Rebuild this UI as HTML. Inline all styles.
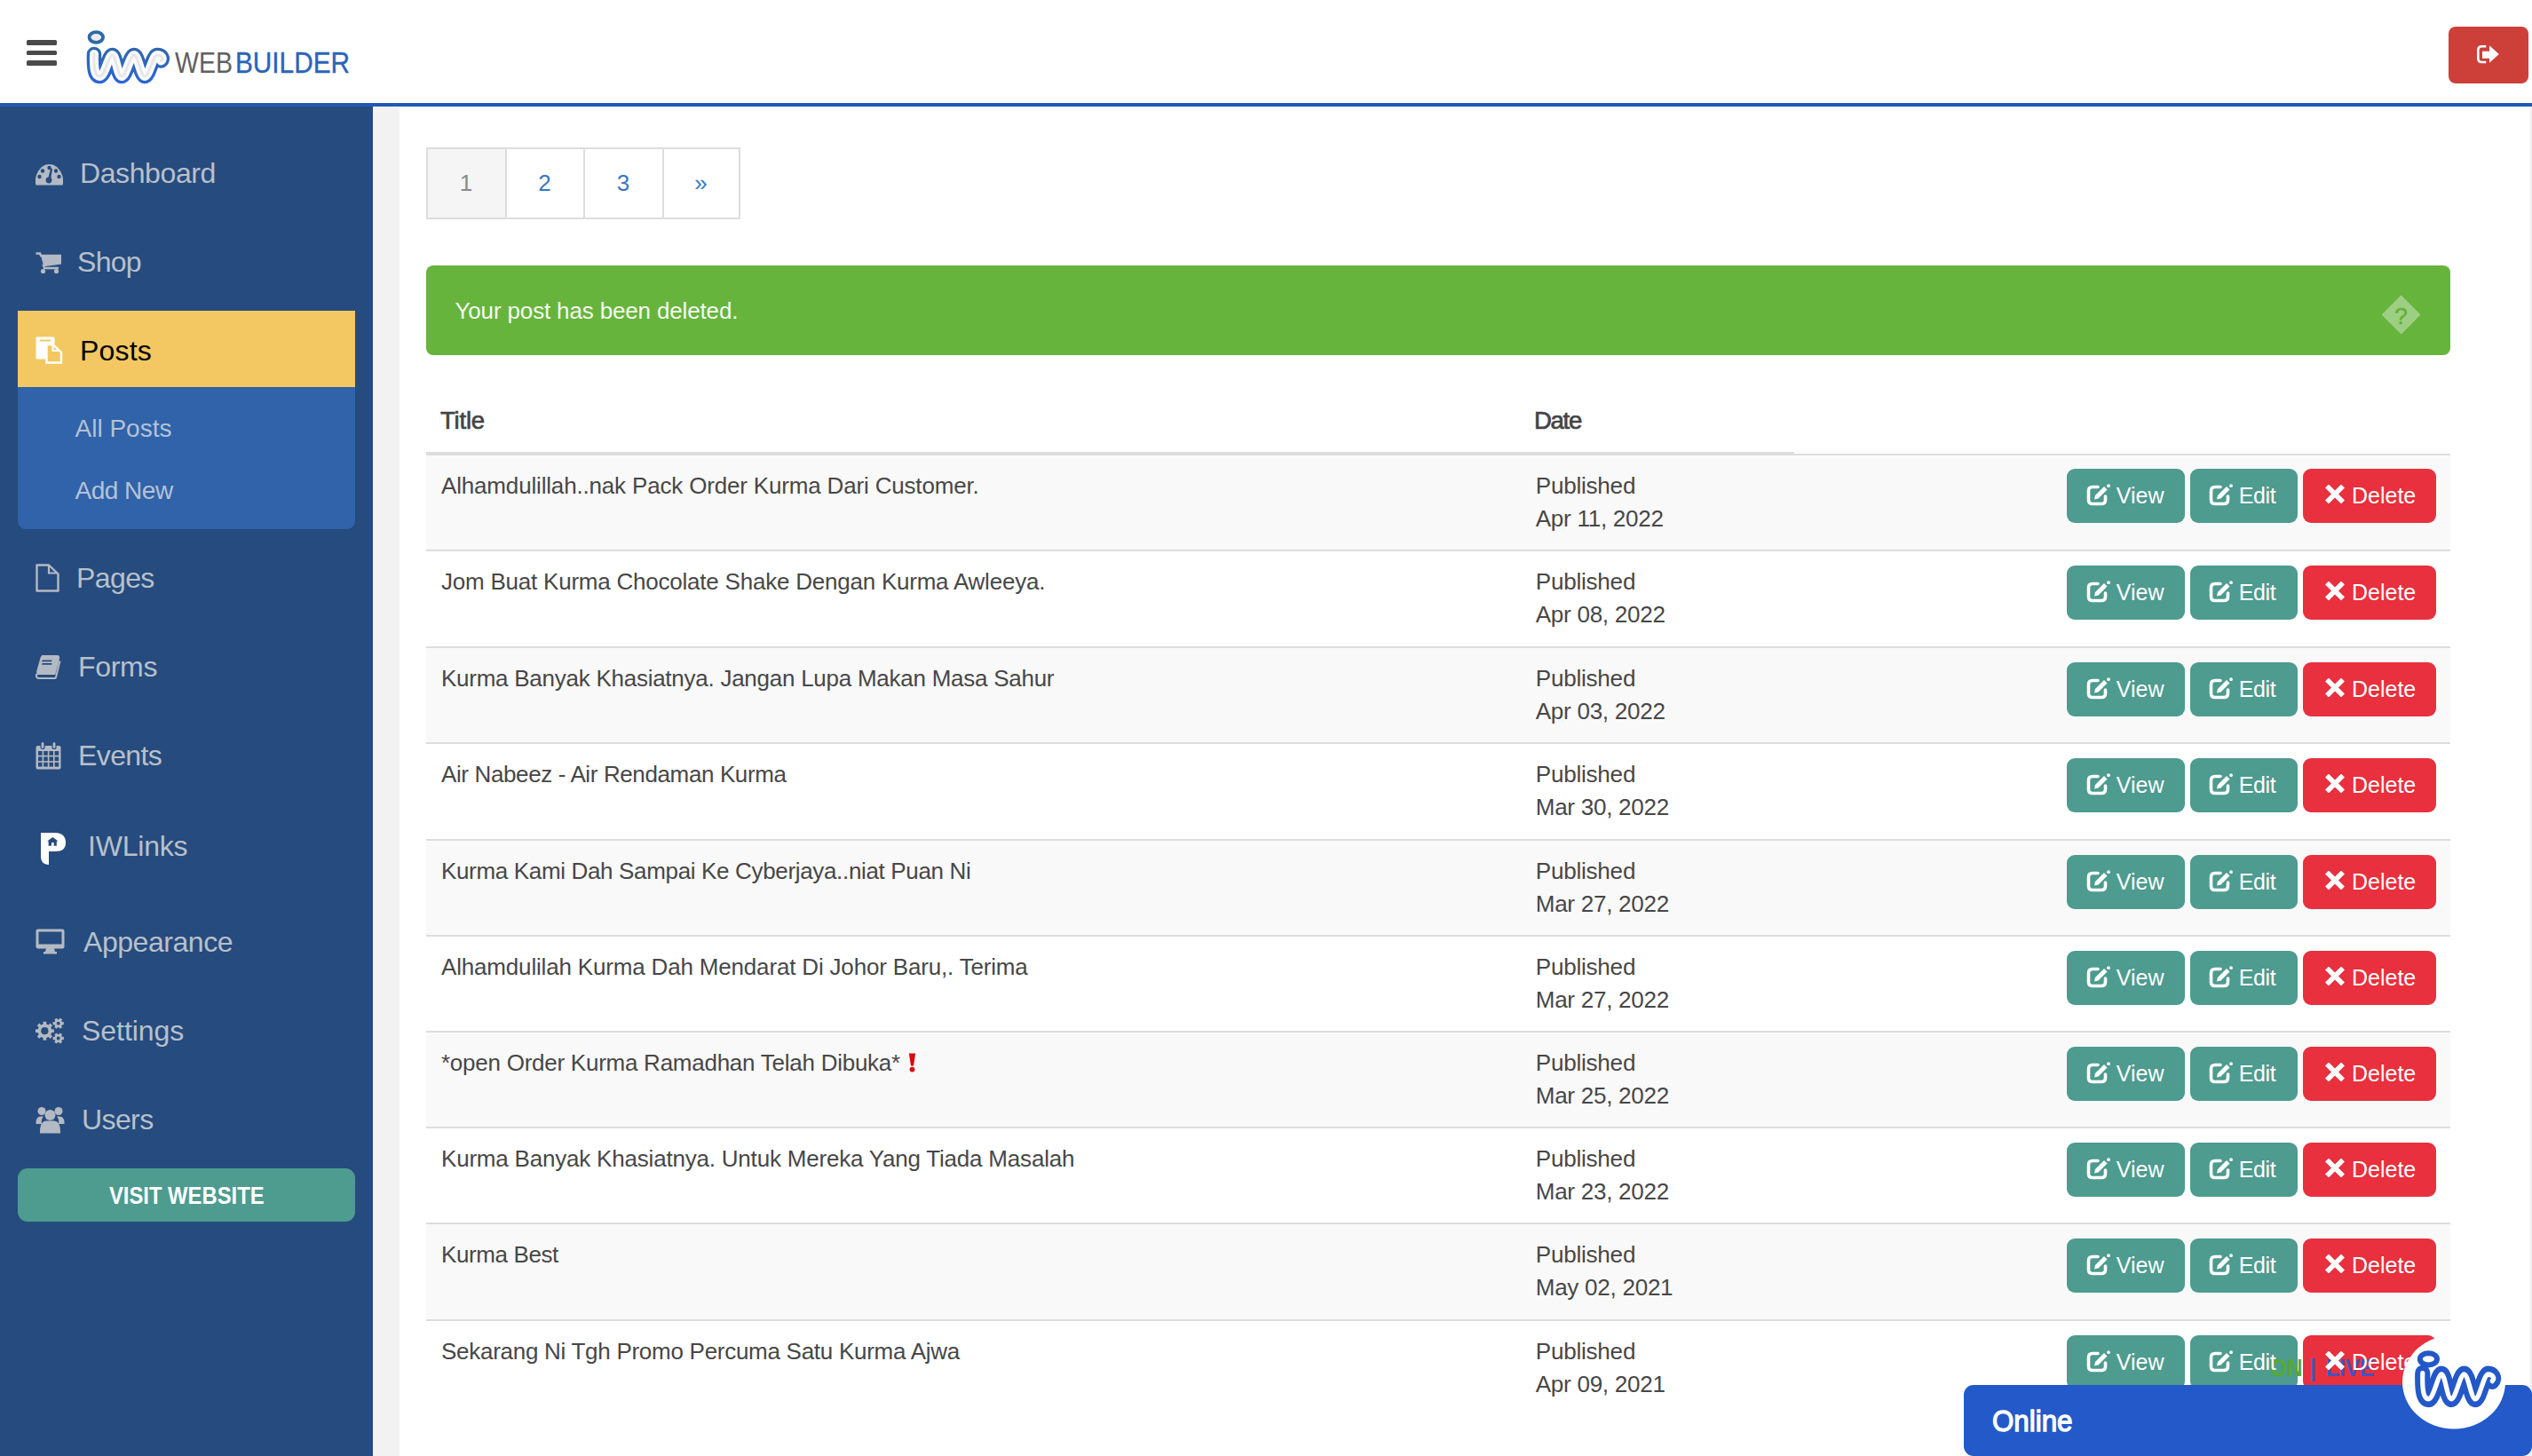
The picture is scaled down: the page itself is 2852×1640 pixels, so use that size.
<!DOCTYPE html>
<html><head><meta charset="utf-8"><title>Posts</title>
<style>
html,body{margin:0;padding:0;width:2852px;height:1640px;overflow:hidden;background:#fff;}
body{position:relative;font-family:"Liberation Sans",sans-serif;}
.t{position:absolute;white-space:nowrap;}
.r{position:absolute;}
@media (max-width:1500px){html{zoom:0.5;}}
</style></head><body>
<div class="r" style="left:0px;top:0px;width:2852px;height:116px;background:#fff;"></div>
<div class="r" style="left:0px;top:116px;width:2852px;height:4px;background:#2257b3;"></div>
<div class="r" style="left:30px;top:45.3px;width:34px;height:5.5px;background:#4a4a4a;border-radius:1.5px;"></div>
<div class="r" style="left:30px;top:56.9px;width:34px;height:5.5px;background:#4a4a4a;border-radius:1.5px;"></div>
<div class="r" style="left:30px;top:68.3px;width:34px;height:5.5px;background:#4a4a4a;border-radius:1.5px;"></div>
<svg class="r" style="left:0px;top:0px" width="200" height="110" viewBox="0 0 200 110">
<defs><linearGradient id="lg1" x1="0" y1="50" x2="0" y2="95" gradientUnits="userSpaceOnUse">
<stop offset="0" stop-color="#2f67a8"/><stop offset="1" stop-color="#2a66d6"/></linearGradient></defs>
<g fill="none" stroke-linecap="round" stroke-linejoin="round">
<ellipse cx="108.3" cy="42" rx="7.8" ry="5.8" stroke="#2d6aa6" stroke-width="3.8" fill="#ececec"/>
<path d="M106 61 C105.5 78 107 86 112.5 86 C118 86 122.5 62 126.5 62 C130.5 62 132.5 86 137 86 C142 86 146.5 62 151 62 C155.5 62 158.5 86 163 86 C168 86 172 62 177 62 C182 62 184.5 66 181.5 68.5" stroke="url(#lg1)" stroke-width="16.5"/>
<path d="M106 61 C105.5 78 107 86 112.5 86 C118 86 122.5 62 126.5 62 C130.5 62 132.5 86 137 86 C142 86 146.5 62 151 62 C155.5 62 158.5 86 163 86 C168 86 172 62 177 62 C182 62 184.5 66 181.5 68.5" stroke="#fbfbfb" stroke-width="10"/>
<path d="M106 61 C105.5 78 107 86 112.5 86 C118 86 122.5 62 126.5 62 C130.5 62 132.5 86 137 86 C142 86 146.5 62 151 62 C155.5 62 158.5 86 163 86 C168 86 172 62 177 62 C182 62 184.5 66 181.5 68.5" stroke="#e2e2e2" stroke-width="3" opacity="0.8"/>
</g></svg>
<div class="t" style="left:196.7px;top:49.66px;font-size:33px;line-height:41px;color:#606060;font-weight:400;letter-spacing:0px;transform:scaleX(0.864);transform-origin:0 0;">WEB</div>
<div class="t" style="left:264.9px;top:49.66px;font-size:33px;line-height:41px;color:#2a64b9;font-weight:400;letter-spacing:0px;transform:scaleX(0.902);transform-origin:0 0;-webkit-text-stroke:0.35px #2a64b9;">BUILDER</div>
<div class="r" style="left:2758px;top:30px;width:90px;height:64px;background:#cc4039;border-radius:8px;"></div>
<svg class="r" style="left:2789px;top:50px" width="28" height="23" viewBox="0 0 28 23">
<path d="M11.3 2.2 H6.5 Q2.3 2.2 2.3 6.4 V15.8 Q2.3 20 6.5 20 H11.3" fill="none" stroke="#fff" stroke-width="2.6"/>
<path d="M7 7.7 H15 V1.2 L25.8 11 L15 20.7 V15.7 H7 Z" fill="#fff"/>
</svg>
<div class="r" style="left:0px;top:120px;width:420px;height:1520px;background:#264b7e;"></div>
<div class="r" style="left:420px;top:120px;width:30px;height:1520px;background:#f2f2f2;"></div>
<div class="r" style="left:20px;top:350px;width:380px;height:86px;background:#f3c862;"></div>
<div class="r" style="left:20px;top:436px;width:380px;height:160px;background:#3063a9;border-radius:0 0 9px 9px;"></div>
<div class="t" style="left:90px;top:174.91px;font-size:32px;line-height:40px;color:#b8c0cb;font-weight:400;letter-spacing:-0.4px;">Dashboard</div>
<div class="t" style="left:87px;top:274.91px;font-size:32px;line-height:40px;color:#b8c0cb;font-weight:400;letter-spacing:-0.7px;">Shop</div>
<div class="t" style="left:90px;top:375.16px;font-size:32px;line-height:40px;color:#000;font-weight:400;letter-spacing:0.2px;">Posts</div>
<div class="t" style="left:86px;top:630.91px;font-size:32px;line-height:40px;color:#b8c0cb;font-weight:400;letter-spacing:-0.6px;">Pages</div>
<div class="t" style="left:88px;top:730.91px;font-size:32px;line-height:40px;color:#b8c0cb;font-weight:400;letter-spacing:-0.3px;">Forms</div>
<div class="t" style="left:88px;top:830.91px;font-size:32px;line-height:40px;color:#b8c0cb;font-weight:400;letter-spacing:-0.6px;">Events</div>
<div class="t" style="left:99px;top:933.41px;font-size:32px;line-height:40px;color:#b8c0cb;font-weight:400;letter-spacing:-0.2px;">IWLinks</div>
<div class="t" style="left:94px;top:1040.91px;font-size:32px;line-height:40px;color:#b8c0cb;font-weight:400;letter-spacing:-0.45px;">Appearance</div>
<div class="t" style="left:92px;top:1140.91px;font-size:32px;line-height:40px;color:#b8c0cb;font-weight:400;letter-spacing:-0.05px;">Settings</div>
<div class="t" style="left:92px;top:1240.91px;font-size:32px;line-height:40px;color:#b8c0cb;font-weight:400;letter-spacing:-0.6px;">Users</div>
<div class="t" style="left:84.5px;top:464.79px;font-size:28px;line-height:35px;color:#b5c2d6;font-weight:400;letter-spacing:0px;">All Posts</div>
<div class="t" style="left:84.5px;top:534.79px;font-size:28px;line-height:35px;color:#b5c2d6;font-weight:400;letter-spacing:-0.5px;">Add New</div>
<div class="r" style="left:20px;top:1316px;width:380px;height:60px;background:#4e9b8f;border-radius:11px;"></div>
<div class="t" style="left:123px;top:1328.79px;font-size:28px;line-height:35px;color:#fff;font-weight:700;letter-spacing:0px;transform:scaleX(0.85);transform-origin:0 0;">VISIT WEBSITE</div>
<svg class="r" style="left:40px;top:184px" width="31" height="25" viewBox="0 0 31 25">
<path d="M0.5 24.5 C-1 20 0 14 3 9 C6 4 10 1 15.5 1 C21 1 25 4 28 9 C31 14 32 20 30.5 24.5 Z" fill="#b4bac3"/>
<g fill="#264b7e"><circle cx="15.5" cy="5" r="2.2"/><circle cx="8" cy="8.5" r="2.2"/><circle cx="23" cy="8.5" r="2.2"/>
<circle cx="4.5" cy="15" r="2.2"/><circle cx="26.5" cy="15" r="2.2"/><circle cx="15" cy="19" r="3.4"/>
<path d="M14 18 L17 5.5 L19 6 L17 19 Z"/></g></svg>
<svg class="r" style="left:40px;top:284px" width="29" height="25" viewBox="0 0 29 25">
<path d="M0.5 1.5 H5 L6 4 H28 V12.5 L9 15 L10 18 H26" fill="none" stroke="#b4bac3" stroke-width="2.4"/>
<path d="M6 4 H28 V12.5 L9 15 Z" fill="#b4bac3"/>
<circle cx="8.5" cy="21.5" r="2.6" fill="#b4bac3"/><circle cx="23.5" cy="21.5" r="2.6" fill="#b4bac3"/></svg>
<svg class="r" style="left:40px;top:379px" width="31" height="32" viewBox="0 0 31 32">
<path d="M2 0.5 H20 Q21.5 0.5 21.5 2 V9 H12 V25.5 H2 Q0.5 25.5 0.5 24 V2 Q0.5 0.5 2 0.5 Z" fill="#fff"/>
<rect x="4.5" y="3.5" width="12.5" height="2" fill="#f3c862"/>
<path d="M12.5 9 H19.5 L29 18 V29.5 H12.5 Z" fill="none" stroke="#fff" stroke-width="2.4"/>
<path d="M19.5 9 V16 H28" fill="none" stroke="#fff" stroke-width="2.2"/></svg>
<svg class="r" style="left:40px;top:635px" width="27" height="32" viewBox="0 0 27 32">
<path d="M1.5 1.5 H15 L25.5 11.5 V30.5 H1.5 Z" fill="none" stroke="#b4bac3" stroke-width="2.4" stroke-linejoin="round"/>
<path d="M15 1.5 V10.5 H25" fill="none" stroke="#b4bac3" stroke-width="2.2"/></svg>
<svg class="r" style="left:40px;top:738px" width="29" height="27" viewBox="0 0 29 27">
<path d="M7 1 H24.5 Q26.5 1 26 3.5 L21.5 21 H3.5 Q0 21 1 24 Q1.5 26 4 26 H21.5 Q22.5 26 23 25 L27.5 6.5" fill="none" stroke="#b4bac3" stroke-width="2"/>
<path d="M7 1 H24.5 Q26.5 1 26 3.5 L21.5 21 H4 Q0.5 21 1.2 18 L5.5 3 Q6 1 7 1 Z" fill="#b4bac3"/>
<rect x="9" y="5.5" width="11" height="1.8" fill="#264b7e" transform="skewX(-15)"/><rect x="10" y="9" width="11" height="1.8" fill="#264b7e" transform="skewX(-15)"/></svg>
<svg class="r" style="left:40px;top:835px" width="29" height="32" viewBox="0 0 29 32">
<rect x="0.5" y="5" width="28" height="26.5" rx="2" fill="#b4bac3"/>
<rect x="6" y="0.5" width="4" height="8" rx="2" fill="#b4bac3" stroke="#264b7e" stroke-width="1.2"/>
<rect x="19" y="0.5" width="4" height="8" rx="2" fill="#b4bac3" stroke="#264b7e" stroke-width="1.2"/>
<g fill="#264b7e"><rect x="3.0" y="11.0" width="4.6" height="4.8"/><rect x="9.2" y="11.0" width="4.6" height="4.8"/><rect x="15.4" y="11.0" width="4.6" height="4.8"/><rect x="21.6" y="11.0" width="4.6" height="4.8"/><rect x="3.0" y="17.4" width="4.6" height="4.8"/><rect x="9.2" y="17.4" width="4.6" height="4.8"/><rect x="15.4" y="17.4" width="4.6" height="4.8"/><rect x="21.6" y="17.4" width="4.6" height="4.8"/><rect x="3.0" y="23.8" width="4.6" height="4.8"/><rect x="9.2" y="23.8" width="4.6" height="4.8"/><rect x="15.4" y="23.8" width="4.6" height="4.8"/><rect x="21.6" y="23.8" width="4.6" height="4.8"/></g></svg>
<svg class="r" style="left:45px;top:937px" width="30" height="38" viewBox="0 0 30 38">
<path d="M1 1 H17 C26 1 29 6 29 12 C29 19 25 22 17 22 H10 V37 C4 37 1 33 1 28 Z" fill="#fff"/>
<path d="M8.2 10.5 L14.35 5.9 L20.5 10.5 H18.8 V15.8 H15.7 V12.1 H13 V15.8 H9.6 V10.5 Z" fill="#264b7e"/></svg>
<svg class="r" style="left:40px;top:1046px" width="33" height="29" viewBox="0 0 33 29">
<rect x="0.5" y="0.5" width="32" height="22" rx="2.5" fill="#b4bac3"/>
<rect x="3.5" y="3.5" width="26" height="14" fill="#264b7e"/>
<path d="M12 22 H21 L22 26 H24 V28.5 H9 V26 H11 Z" fill="#b4bac3"/></svg>
<svg class="r" style="left:40px;top:1147px" width="33" height="30" viewBox="0 0 33 30">
<g fill="#b4bac3"><path d="M18.21 12.45 L20.83 12.34 L20.83 16.06 L18.21 15.95 L17.16 18.48 L19.10 20.26 L16.46 22.90 L14.68 20.96 L12.15 22.01 L12.26 24.63 L8.54 24.63 L8.65 22.01 L6.12 20.96 L4.34 22.90 L1.70 20.26 L3.64 18.48 L2.59 15.95 L-0.03 16.06 L-0.03 12.34 L2.59 12.45 L3.64 9.92 L1.70 8.14 L4.34 5.50 L6.12 7.44 L8.65 6.39 L8.54 3.77 L12.26 3.77 L12.15 6.39 L14.68 7.44 L16.46 5.50 L19.10 8.14 L17.16 9.92 Z"/><path d="M30.06 4.22 L31.79 4.07 L31.79 7.33 L30.06 7.18 L29.16 8.73 L30.15 10.15 L27.33 11.79 L26.60 10.21 L24.80 10.21 L24.07 11.79 L21.25 10.15 L22.24 8.73 L21.34 7.18 L19.61 7.33 L19.61 4.07 L21.34 4.22 L22.24 2.67 L21.25 1.25 L24.07 -0.39 L24.80 1.19 L26.60 1.19 L27.33 -0.39 L30.15 1.25 L29.16 2.67 Z"/><path d="M30.06 21.02 L31.79 20.87 L31.79 24.13 L30.06 23.98 L29.16 25.53 L30.15 26.95 L27.33 28.59 L26.60 27.01 L24.80 27.01 L24.07 28.59 L21.25 26.95 L22.24 25.53 L21.34 23.98 L19.61 24.13 L19.61 20.87 L21.34 21.02 L22.24 19.47 L21.25 18.05 L24.07 16.41 L24.80 17.99 L26.60 17.99 L27.33 16.41 L30.15 18.05 L29.16 19.47 Z"/></g>
<g fill="#264b7e"><circle cx="10.4" cy="14.2" r="4.1"/><circle cx="25.7" cy="5.7" r="1.9"/><circle cx="25.7" cy="22.5" r="1.9"/></g></svg>
<svg class="r" style="left:40px;top:1246px" width="33" height="31" viewBox="0 0 33 31">
<g fill="#b4bac3"><circle cx="7" cy="5.5" r="4.5"/><circle cx="26" cy="5.5" r="4.5"/><circle cx="16.5" cy="10" r="6"/>
<path d="M0.5 19 Q0.5 11.5 6 11.5 H9 Q6 15 7 20 H0.5 Z"/><path d="M32.5 19 Q32.5 11.5 27 11.5 H24 Q27 15 26 20 H32.5 Z"/>
<path d="M5 30.5 Q4.5 17 12 16.5 H21 Q28.5 17 28 30.5 Z"/></g></svg>
<div class="r" style="left:450px;top:120px;width:2400px;height:1520px;background:#fff;"></div>
<div class="r" style="left:2850px;top:120px;width:2px;height:1520px;background:#f0f0f0;"></div>
<div class="r" style="left:480px;top:166px;width:354px;height:81px;border:2px solid #ddd;box-sizing:border-box;"></div>
<div class="r" style="left:482px;top:168px;width:87px;height:77px;background:#f5f5f5;"></div>
<div class="r" style="left:569px;top:166px;width:2px;height:81px;background:#ddd;"></div>
<div class="r" style="left:657px;top:166px;width:2px;height:81px;background:#ddd;"></div>
<div class="r" style="left:746px;top:166px;width:2px;height:81px;background:#ddd;"></div>
<div class="t" style="left:485px;top:189.99px;font-size:26px;line-height:32px;color:#8a8a8a;font-weight:400;letter-spacing:0px;width:80px;text-align:center;">1</div>
<div class="t" style="left:573.5px;top:189.99px;font-size:26px;line-height:32px;color:#3a78c3;font-weight:400;letter-spacing:0px;width:80px;text-align:center;">2</div>
<div class="t" style="left:662px;top:189.99px;font-size:26px;line-height:32px;color:#3a78c3;font-weight:400;letter-spacing:0px;width:80px;text-align:center;">3</div>
<div class="t" style="left:749.5px;top:189.99px;font-size:26px;line-height:32px;color:#3a78c3;font-weight:400;letter-spacing:0px;width:80px;text-align:center;">&raquo;</div>
<div class="r" style="left:480px;top:299px;width:2280px;height:101px;background:#67b43d;border-radius:8px;"></div>
<div class="t" style="left:512.5px;top:333.74px;font-size:26px;line-height:32px;color:#f4faef;font-weight:400;letter-spacing:-0.15px;">Your post has been deleted.</div>
<div class="r" style="left:2689.3px;top:339.3px;width:31.2px;height:31.2px;background:rgba(255,255,255,0.36);transform:rotate(45deg);"></div>
<div class="t" style="left:2689.5px;top:340.29px;font-size:26px;line-height:32px;color:#63b03a;font-weight:400;letter-spacing:0px;width:30px;text-align:center;-webkit-text-stroke:0.6px #63b03a;">?</div>
<div class="t" style="left:496px;top:456.97px;font-size:27.5px;line-height:34px;color:#444;font-weight:400;letter-spacing:-0.2px;-webkit-text-stroke:0.7px #444;">Title</div>
<div class="t" style="left:1728px;top:456.97px;font-size:27.5px;line-height:34px;color:#444;font-weight:400;letter-spacing:-1.3px;-webkit-text-stroke:0.7px #444;">Date</div>
<div class="r" style="left:480px;top:509px;width:1541px;height:4px;background:#ddd;"></div>
<div class="r" style="left:2021px;top:510.5px;width:739px;height:2px;background:#ddd;"></div>
<div class="r" style="left:480px;top:513px;width:2280px;height:106px;background:#f9f9f9;"></div>
<div class="t" style="left:497px;top:531.24px;font-size:26px;line-height:32px;color:#474747;font-weight:400;letter-spacing:-0.171px;">Alhamdulillah..nak Pack Order Kurma Dari Customer.</div>
<div class="t" style="left:1729.75px;top:531.24px;font-size:26px;line-height:32px;color:#474747;font-weight:400;letter-spacing:-0.2px;">Published</div>
<div class="t" style="left:1729.75px;top:568.14px;font-size:26px;line-height:32px;color:#474747;font-weight:400;letter-spacing:-0.25px;">Apr 11, 2022</div>
<div class="r" style="left:2328px;top:528px;width:133px;height:61px;background:#4e9b8f;border-radius:9px;"></div>
<div class="r" style="left:2467px;top:528px;width:121px;height:61px;background:#4e9b8f;border-radius:9px;"></div>
<div class="r" style="left:2594px;top:528px;width:150px;height:61px;background:#e8303e;border-radius:9px;"></div>
<svg width="27" height="25" viewBox="0 0 27 25" style="position:absolute;left:2349.5px;top:545px">
<path d="M13 3.5 H7 Q2.5 3.5 2.5 8 V18 Q2.5 22.5 7 22.5 H17 Q21.5 22.5 21.5 18 V14" fill="none" stroke="#fff" stroke-width="3.6" stroke-linecap="round"/>
<path d="M9 17.5 L10 13 L20 3 L23.5 6.5 L13.5 16.5 Z" fill="#fff"/><circle cx="25" cy="2.2" r="1.9" fill="#fff"/></svg>
<svg width="27" height="25" viewBox="0 0 27 25" style="position:absolute;left:2488.3px;top:545px">
<path d="M13 3.5 H7 Q2.5 3.5 2.5 8 V18 Q2.5 22.5 7 22.5 H17 Q21.5 22.5 21.5 18 V14" fill="none" stroke="#fff" stroke-width="3.6" stroke-linecap="round"/>
<path d="M9 17.5 L10 13 L20 3 L23.5 6.5 L13.5 16.5 Z" fill="#fff"/><circle cx="25" cy="2.2" r="1.9" fill="#fff"/></svg>
<svg width="22" height="21" viewBox="0 0 22 21" style="position:absolute;left:2619px;top:546px;z-index:2"><path d="M2 1.5 L20 19.5 M20 1.5 L2 19.5" stroke="#fff" stroke-width="5.6" stroke-linecap="butt"/></svg>
<div class="t" style="left:2383.8px;top:543.03px;font-size:25px;line-height:31px;color:#fff;font-weight:400;letter-spacing:0px;z-index:2;">View</div>
<div class="t" style="left:2521.8px;top:543.03px;font-size:25px;line-height:31px;color:#fff;font-weight:400;letter-spacing:-0.4px;z-index:2;">Edit</div>
<div class="t" style="left:2649px;top:543.03px;font-size:25px;line-height:31px;color:#fff;font-weight:400;letter-spacing:0px;z-index:2;">Delete</div>
<div class="r" style="left:480px;top:619px;width:2280px;height:2px;background:#ddd;"></div>
<div class="t" style="left:497px;top:639.24px;font-size:26px;line-height:32px;color:#474747;font-weight:400;letter-spacing:-0.224px;">Jom Buat Kurma Chocolate Shake Dengan Kurma Awleeya.</div>
<div class="t" style="left:1729.75px;top:639.24px;font-size:26px;line-height:32px;color:#474747;font-weight:400;letter-spacing:-0.2px;">Published</div>
<div class="t" style="left:1729.75px;top:676.14px;font-size:26px;line-height:32px;color:#474747;font-weight:400;letter-spacing:-0.25px;">Apr 08, 2022</div>
<div class="r" style="left:2328px;top:637px;width:133px;height:61px;background:#4e9b8f;border-radius:9px;"></div>
<div class="r" style="left:2467px;top:637px;width:121px;height:61px;background:#4e9b8f;border-radius:9px;"></div>
<div class="r" style="left:2594px;top:637px;width:150px;height:61px;background:#e8303e;border-radius:9px;"></div>
<svg width="27" height="25" viewBox="0 0 27 25" style="position:absolute;left:2349.5px;top:654px">
<path d="M13 3.5 H7 Q2.5 3.5 2.5 8 V18 Q2.5 22.5 7 22.5 H17 Q21.5 22.5 21.5 18 V14" fill="none" stroke="#fff" stroke-width="3.6" stroke-linecap="round"/>
<path d="M9 17.5 L10 13 L20 3 L23.5 6.5 L13.5 16.5 Z" fill="#fff"/><circle cx="25" cy="2.2" r="1.9" fill="#fff"/></svg>
<svg width="27" height="25" viewBox="0 0 27 25" style="position:absolute;left:2488.3px;top:654px">
<path d="M13 3.5 H7 Q2.5 3.5 2.5 8 V18 Q2.5 22.5 7 22.5 H17 Q21.5 22.5 21.5 18 V14" fill="none" stroke="#fff" stroke-width="3.6" stroke-linecap="round"/>
<path d="M9 17.5 L10 13 L20 3 L23.5 6.5 L13.5 16.5 Z" fill="#fff"/><circle cx="25" cy="2.2" r="1.9" fill="#fff"/></svg>
<svg width="22" height="21" viewBox="0 0 22 21" style="position:absolute;left:2619px;top:655px;z-index:2"><path d="M2 1.5 L20 19.5 M20 1.5 L2 19.5" stroke="#fff" stroke-width="5.6" stroke-linecap="butt"/></svg>
<div class="t" style="left:2383.8px;top:652.03px;font-size:25px;line-height:31px;color:#fff;font-weight:400;letter-spacing:0px;z-index:2;">View</div>
<div class="t" style="left:2521.8px;top:652.03px;font-size:25px;line-height:31px;color:#fff;font-weight:400;letter-spacing:-0.4px;z-index:2;">Edit</div>
<div class="t" style="left:2649px;top:652.03px;font-size:25px;line-height:31px;color:#fff;font-weight:400;letter-spacing:0px;z-index:2;">Delete</div>
<div class="r" style="left:480px;top:728px;width:2280px;height:2px;background:#ddd;"></div>
<div class="r" style="left:480px;top:730px;width:2280px;height:106px;background:#f9f9f9;"></div>
<div class="t" style="left:497px;top:748.24px;font-size:26px;line-height:32px;color:#474747;font-weight:400;letter-spacing:-0.257px;">Kurma Banyak Khasiatnya. Jangan Lupa Makan Masa Sahur</div>
<div class="t" style="left:1729.75px;top:748.24px;font-size:26px;line-height:32px;color:#474747;font-weight:400;letter-spacing:-0.2px;">Published</div>
<div class="t" style="left:1729.75px;top:785.14px;font-size:26px;line-height:32px;color:#474747;font-weight:400;letter-spacing:-0.25px;">Apr 03, 2022</div>
<div class="r" style="left:2328px;top:746px;width:133px;height:61px;background:#4e9b8f;border-radius:9px;"></div>
<div class="r" style="left:2467px;top:746px;width:121px;height:61px;background:#4e9b8f;border-radius:9px;"></div>
<div class="r" style="left:2594px;top:746px;width:150px;height:61px;background:#e8303e;border-radius:9px;"></div>
<svg width="27" height="25" viewBox="0 0 27 25" style="position:absolute;left:2349.5px;top:763px">
<path d="M13 3.5 H7 Q2.5 3.5 2.5 8 V18 Q2.5 22.5 7 22.5 H17 Q21.5 22.5 21.5 18 V14" fill="none" stroke="#fff" stroke-width="3.6" stroke-linecap="round"/>
<path d="M9 17.5 L10 13 L20 3 L23.5 6.5 L13.5 16.5 Z" fill="#fff"/><circle cx="25" cy="2.2" r="1.9" fill="#fff"/></svg>
<svg width="27" height="25" viewBox="0 0 27 25" style="position:absolute;left:2488.3px;top:763px">
<path d="M13 3.5 H7 Q2.5 3.5 2.5 8 V18 Q2.5 22.5 7 22.5 H17 Q21.5 22.5 21.5 18 V14" fill="none" stroke="#fff" stroke-width="3.6" stroke-linecap="round"/>
<path d="M9 17.5 L10 13 L20 3 L23.5 6.5 L13.5 16.5 Z" fill="#fff"/><circle cx="25" cy="2.2" r="1.9" fill="#fff"/></svg>
<svg width="22" height="21" viewBox="0 0 22 21" style="position:absolute;left:2619px;top:764px;z-index:2"><path d="M2 1.5 L20 19.5 M20 1.5 L2 19.5" stroke="#fff" stroke-width="5.6" stroke-linecap="butt"/></svg>
<div class="t" style="left:2383.8px;top:761.03px;font-size:25px;line-height:31px;color:#fff;font-weight:400;letter-spacing:0px;z-index:2;">View</div>
<div class="t" style="left:2521.8px;top:761.03px;font-size:25px;line-height:31px;color:#fff;font-weight:400;letter-spacing:-0.4px;z-index:2;">Edit</div>
<div class="t" style="left:2649px;top:761.03px;font-size:25px;line-height:31px;color:#fff;font-weight:400;letter-spacing:0px;z-index:2;">Delete</div>
<div class="r" style="left:480px;top:836px;width:2280px;height:2px;background:#ddd;"></div>
<div class="t" style="left:497px;top:856.24px;font-size:26px;line-height:32px;color:#474747;font-weight:400;letter-spacing:-0.377px;">Air Nabeez - Air Rendaman Kurma</div>
<div class="t" style="left:1729.75px;top:856.24px;font-size:26px;line-height:32px;color:#474747;font-weight:400;letter-spacing:-0.2px;">Published</div>
<div class="t" style="left:1729.75px;top:893.14px;font-size:26px;line-height:32px;color:#474747;font-weight:400;letter-spacing:-0.25px;">Mar 30, 2022</div>
<div class="r" style="left:2328px;top:854px;width:133px;height:61px;background:#4e9b8f;border-radius:9px;"></div>
<div class="r" style="left:2467px;top:854px;width:121px;height:61px;background:#4e9b8f;border-radius:9px;"></div>
<div class="r" style="left:2594px;top:854px;width:150px;height:61px;background:#e8303e;border-radius:9px;"></div>
<svg width="27" height="25" viewBox="0 0 27 25" style="position:absolute;left:2349.5px;top:871px">
<path d="M13 3.5 H7 Q2.5 3.5 2.5 8 V18 Q2.5 22.5 7 22.5 H17 Q21.5 22.5 21.5 18 V14" fill="none" stroke="#fff" stroke-width="3.6" stroke-linecap="round"/>
<path d="M9 17.5 L10 13 L20 3 L23.5 6.5 L13.5 16.5 Z" fill="#fff"/><circle cx="25" cy="2.2" r="1.9" fill="#fff"/></svg>
<svg width="27" height="25" viewBox="0 0 27 25" style="position:absolute;left:2488.3px;top:871px">
<path d="M13 3.5 H7 Q2.5 3.5 2.5 8 V18 Q2.5 22.5 7 22.5 H17 Q21.5 22.5 21.5 18 V14" fill="none" stroke="#fff" stroke-width="3.6" stroke-linecap="round"/>
<path d="M9 17.5 L10 13 L20 3 L23.5 6.5 L13.5 16.5 Z" fill="#fff"/><circle cx="25" cy="2.2" r="1.9" fill="#fff"/></svg>
<svg width="22" height="21" viewBox="0 0 22 21" style="position:absolute;left:2619px;top:872px;z-index:2"><path d="M2 1.5 L20 19.5 M20 1.5 L2 19.5" stroke="#fff" stroke-width="5.6" stroke-linecap="butt"/></svg>
<div class="t" style="left:2383.8px;top:869.03px;font-size:25px;line-height:31px;color:#fff;font-weight:400;letter-spacing:0px;z-index:2;">View</div>
<div class="t" style="left:2521.8px;top:869.03px;font-size:25px;line-height:31px;color:#fff;font-weight:400;letter-spacing:-0.4px;z-index:2;">Edit</div>
<div class="t" style="left:2649px;top:869.03px;font-size:25px;line-height:31px;color:#fff;font-weight:400;letter-spacing:0px;z-index:2;">Delete</div>
<div class="r" style="left:480px;top:945px;width:2280px;height:2px;background:#ddd;"></div>
<div class="r" style="left:480px;top:947px;width:2280px;height:106px;background:#f9f9f9;"></div>
<div class="t" style="left:497px;top:965.24px;font-size:26px;line-height:32px;color:#474747;font-weight:400;letter-spacing:-0.339px;">Kurma Kami Dah Sampai Ke Cyberjaya..niat Puan Ni</div>
<div class="t" style="left:1729.75px;top:965.24px;font-size:26px;line-height:32px;color:#474747;font-weight:400;letter-spacing:-0.2px;">Published</div>
<div class="t" style="left:1729.75px;top:1002.14px;font-size:26px;line-height:32px;color:#474747;font-weight:400;letter-spacing:-0.25px;">Mar 27, 2022</div>
<div class="r" style="left:2328px;top:963px;width:133px;height:61px;background:#4e9b8f;border-radius:9px;"></div>
<div class="r" style="left:2467px;top:963px;width:121px;height:61px;background:#4e9b8f;border-radius:9px;"></div>
<div class="r" style="left:2594px;top:963px;width:150px;height:61px;background:#e8303e;border-radius:9px;"></div>
<svg width="27" height="25" viewBox="0 0 27 25" style="position:absolute;left:2349.5px;top:980px">
<path d="M13 3.5 H7 Q2.5 3.5 2.5 8 V18 Q2.5 22.5 7 22.5 H17 Q21.5 22.5 21.5 18 V14" fill="none" stroke="#fff" stroke-width="3.6" stroke-linecap="round"/>
<path d="M9 17.5 L10 13 L20 3 L23.5 6.5 L13.5 16.5 Z" fill="#fff"/><circle cx="25" cy="2.2" r="1.9" fill="#fff"/></svg>
<svg width="27" height="25" viewBox="0 0 27 25" style="position:absolute;left:2488.3px;top:980px">
<path d="M13 3.5 H7 Q2.5 3.5 2.5 8 V18 Q2.5 22.5 7 22.5 H17 Q21.5 22.5 21.5 18 V14" fill="none" stroke="#fff" stroke-width="3.6" stroke-linecap="round"/>
<path d="M9 17.5 L10 13 L20 3 L23.5 6.5 L13.5 16.5 Z" fill="#fff"/><circle cx="25" cy="2.2" r="1.9" fill="#fff"/></svg>
<svg width="22" height="21" viewBox="0 0 22 21" style="position:absolute;left:2619px;top:981px;z-index:2"><path d="M2 1.5 L20 19.5 M20 1.5 L2 19.5" stroke="#fff" stroke-width="5.6" stroke-linecap="butt"/></svg>
<div class="t" style="left:2383.8px;top:978.03px;font-size:25px;line-height:31px;color:#fff;font-weight:400;letter-spacing:0px;z-index:2;">View</div>
<div class="t" style="left:2521.8px;top:978.03px;font-size:25px;line-height:31px;color:#fff;font-weight:400;letter-spacing:-0.4px;z-index:2;">Edit</div>
<div class="t" style="left:2649px;top:978.03px;font-size:25px;line-height:31px;color:#fff;font-weight:400;letter-spacing:0px;z-index:2;">Delete</div>
<div class="r" style="left:480px;top:1053px;width:2280px;height:2px;background:#ddd;"></div>
<div class="t" style="left:497px;top:1073.24px;font-size:26px;line-height:32px;color:#474747;font-weight:400;letter-spacing:-0.175px;">Alhamdulilah Kurma Dah Mendarat Di Johor Baru,. Terima</div>
<div class="t" style="left:1729.75px;top:1073.24px;font-size:26px;line-height:32px;color:#474747;font-weight:400;letter-spacing:-0.2px;">Published</div>
<div class="t" style="left:1729.75px;top:1110.14px;font-size:26px;line-height:32px;color:#474747;font-weight:400;letter-spacing:-0.25px;">Mar 27, 2022</div>
<div class="r" style="left:2328px;top:1071px;width:133px;height:61px;background:#4e9b8f;border-radius:9px;"></div>
<div class="r" style="left:2467px;top:1071px;width:121px;height:61px;background:#4e9b8f;border-radius:9px;"></div>
<div class="r" style="left:2594px;top:1071px;width:150px;height:61px;background:#e8303e;border-radius:9px;"></div>
<svg width="27" height="25" viewBox="0 0 27 25" style="position:absolute;left:2349.5px;top:1088px">
<path d="M13 3.5 H7 Q2.5 3.5 2.5 8 V18 Q2.5 22.5 7 22.5 H17 Q21.5 22.5 21.5 18 V14" fill="none" stroke="#fff" stroke-width="3.6" stroke-linecap="round"/>
<path d="M9 17.5 L10 13 L20 3 L23.5 6.5 L13.5 16.5 Z" fill="#fff"/><circle cx="25" cy="2.2" r="1.9" fill="#fff"/></svg>
<svg width="27" height="25" viewBox="0 0 27 25" style="position:absolute;left:2488.3px;top:1088px">
<path d="M13 3.5 H7 Q2.5 3.5 2.5 8 V18 Q2.5 22.5 7 22.5 H17 Q21.5 22.5 21.5 18 V14" fill="none" stroke="#fff" stroke-width="3.6" stroke-linecap="round"/>
<path d="M9 17.5 L10 13 L20 3 L23.5 6.5 L13.5 16.5 Z" fill="#fff"/><circle cx="25" cy="2.2" r="1.9" fill="#fff"/></svg>
<svg width="22" height="21" viewBox="0 0 22 21" style="position:absolute;left:2619px;top:1089px;z-index:2"><path d="M2 1.5 L20 19.5 M20 1.5 L2 19.5" stroke="#fff" stroke-width="5.6" stroke-linecap="butt"/></svg>
<div class="t" style="left:2383.8px;top:1086.03px;font-size:25px;line-height:31px;color:#fff;font-weight:400;letter-spacing:0px;z-index:2;">View</div>
<div class="t" style="left:2521.8px;top:1086.03px;font-size:25px;line-height:31px;color:#fff;font-weight:400;letter-spacing:-0.4px;z-index:2;">Edit</div>
<div class="t" style="left:2649px;top:1086.03px;font-size:25px;line-height:31px;color:#fff;font-weight:400;letter-spacing:0px;z-index:2;">Delete</div>
<div class="r" style="left:480px;top:1161px;width:2280px;height:2px;background:#ddd;"></div>
<div class="r" style="left:480px;top:1163px;width:2280px;height:106px;background:#f9f9f9;"></div>
<div class="t" style="left:497px;top:1181.24px;font-size:26px;line-height:32px;color:#474747;font-weight:400;letter-spacing:-0.253px;">*open Order Kurma Ramadhan Telah Dibuka*</div>
<div class="t" style="left:1729.75px;top:1181.24px;font-size:26px;line-height:32px;color:#474747;font-weight:400;letter-spacing:-0.2px;">Published</div>
<div class="t" style="left:1729.75px;top:1218.14px;font-size:26px;line-height:32px;color:#474747;font-weight:400;letter-spacing:-0.25px;">Mar 25, 2022</div>
<div class="r" style="left:2328px;top:1179px;width:133px;height:61px;background:#4e9b8f;border-radius:9px;"></div>
<div class="r" style="left:2467px;top:1179px;width:121px;height:61px;background:#4e9b8f;border-radius:9px;"></div>
<div class="r" style="left:2594px;top:1179px;width:150px;height:61px;background:#e8303e;border-radius:9px;"></div>
<svg width="27" height="25" viewBox="0 0 27 25" style="position:absolute;left:2349.5px;top:1196px">
<path d="M13 3.5 H7 Q2.5 3.5 2.5 8 V18 Q2.5 22.5 7 22.5 H17 Q21.5 22.5 21.5 18 V14" fill="none" stroke="#fff" stroke-width="3.6" stroke-linecap="round"/>
<path d="M9 17.5 L10 13 L20 3 L23.5 6.5 L13.5 16.5 Z" fill="#fff"/><circle cx="25" cy="2.2" r="1.9" fill="#fff"/></svg>
<svg width="27" height="25" viewBox="0 0 27 25" style="position:absolute;left:2488.3px;top:1196px">
<path d="M13 3.5 H7 Q2.5 3.5 2.5 8 V18 Q2.5 22.5 7 22.5 H17 Q21.5 22.5 21.5 18 V14" fill="none" stroke="#fff" stroke-width="3.6" stroke-linecap="round"/>
<path d="M9 17.5 L10 13 L20 3 L23.5 6.5 L13.5 16.5 Z" fill="#fff"/><circle cx="25" cy="2.2" r="1.9" fill="#fff"/></svg>
<svg width="22" height="21" viewBox="0 0 22 21" style="position:absolute;left:2619px;top:1197px;z-index:2"><path d="M2 1.5 L20 19.5 M20 1.5 L2 19.5" stroke="#fff" stroke-width="5.6" stroke-linecap="butt"/></svg>
<div class="t" style="left:2383.8px;top:1194.03px;font-size:25px;line-height:31px;color:#fff;font-weight:400;letter-spacing:0px;z-index:2;">View</div>
<div class="t" style="left:2521.8px;top:1194.03px;font-size:25px;line-height:31px;color:#fff;font-weight:400;letter-spacing:-0.4px;z-index:2;">Edit</div>
<div class="t" style="left:2649px;top:1194.03px;font-size:25px;line-height:31px;color:#fff;font-weight:400;letter-spacing:0px;z-index:2;">Delete</div>
<div class="r" style="left:480px;top:1269px;width:2280px;height:2px;background:#ddd;"></div>
<div class="t" style="left:497px;top:1289.24px;font-size:26px;line-height:32px;color:#474747;font-weight:400;letter-spacing:-0.202px;">Kurma Banyak Khasiatnya. Untuk Mereka Yang Tiada Masalah</div>
<div class="t" style="left:1729.75px;top:1289.24px;font-size:26px;line-height:32px;color:#474747;font-weight:400;letter-spacing:-0.2px;">Published</div>
<div class="t" style="left:1729.75px;top:1326.14px;font-size:26px;line-height:32px;color:#474747;font-weight:400;letter-spacing:-0.25px;">Mar 23, 2022</div>
<div class="r" style="left:2328px;top:1287px;width:133px;height:61px;background:#4e9b8f;border-radius:9px;"></div>
<div class="r" style="left:2467px;top:1287px;width:121px;height:61px;background:#4e9b8f;border-radius:9px;"></div>
<div class="r" style="left:2594px;top:1287px;width:150px;height:61px;background:#e8303e;border-radius:9px;"></div>
<svg width="27" height="25" viewBox="0 0 27 25" style="position:absolute;left:2349.5px;top:1304px">
<path d="M13 3.5 H7 Q2.5 3.5 2.5 8 V18 Q2.5 22.5 7 22.5 H17 Q21.5 22.5 21.5 18 V14" fill="none" stroke="#fff" stroke-width="3.6" stroke-linecap="round"/>
<path d="M9 17.5 L10 13 L20 3 L23.5 6.5 L13.5 16.5 Z" fill="#fff"/><circle cx="25" cy="2.2" r="1.9" fill="#fff"/></svg>
<svg width="27" height="25" viewBox="0 0 27 25" style="position:absolute;left:2488.3px;top:1304px">
<path d="M13 3.5 H7 Q2.5 3.5 2.5 8 V18 Q2.5 22.5 7 22.5 H17 Q21.5 22.5 21.5 18 V14" fill="none" stroke="#fff" stroke-width="3.6" stroke-linecap="round"/>
<path d="M9 17.5 L10 13 L20 3 L23.5 6.5 L13.5 16.5 Z" fill="#fff"/><circle cx="25" cy="2.2" r="1.9" fill="#fff"/></svg>
<svg width="22" height="21" viewBox="0 0 22 21" style="position:absolute;left:2619px;top:1305px;z-index:2"><path d="M2 1.5 L20 19.5 M20 1.5 L2 19.5" stroke="#fff" stroke-width="5.6" stroke-linecap="butt"/></svg>
<div class="t" style="left:2383.8px;top:1302.03px;font-size:25px;line-height:31px;color:#fff;font-weight:400;letter-spacing:0px;z-index:2;">View</div>
<div class="t" style="left:2521.8px;top:1302.03px;font-size:25px;line-height:31px;color:#fff;font-weight:400;letter-spacing:-0.4px;z-index:2;">Edit</div>
<div class="t" style="left:2649px;top:1302.03px;font-size:25px;line-height:31px;color:#fff;font-weight:400;letter-spacing:0px;z-index:2;">Delete</div>
<div class="r" style="left:480px;top:1377px;width:2280px;height:2px;background:#ddd;"></div>
<div class="r" style="left:480px;top:1379px;width:2280px;height:107px;background:#f9f9f9;"></div>
<div class="t" style="left:497px;top:1397.24px;font-size:26px;line-height:32px;color:#474747;font-weight:400;letter-spacing:-0.387px;">Kurma Best</div>
<div class="t" style="left:1729.75px;top:1397.24px;font-size:26px;line-height:32px;color:#474747;font-weight:400;letter-spacing:-0.2px;">Published</div>
<div class="t" style="left:1729.75px;top:1434.14px;font-size:26px;line-height:32px;color:#474747;font-weight:400;letter-spacing:-0.25px;">May 02, 2021</div>
<div class="r" style="left:2328px;top:1395px;width:133px;height:61px;background:#4e9b8f;border-radius:9px;"></div>
<div class="r" style="left:2467px;top:1395px;width:121px;height:61px;background:#4e9b8f;border-radius:9px;"></div>
<div class="r" style="left:2594px;top:1395px;width:150px;height:61px;background:#e8303e;border-radius:9px;"></div>
<svg width="27" height="25" viewBox="0 0 27 25" style="position:absolute;left:2349.5px;top:1412px">
<path d="M13 3.5 H7 Q2.5 3.5 2.5 8 V18 Q2.5 22.5 7 22.5 H17 Q21.5 22.5 21.5 18 V14" fill="none" stroke="#fff" stroke-width="3.6" stroke-linecap="round"/>
<path d="M9 17.5 L10 13 L20 3 L23.5 6.5 L13.5 16.5 Z" fill="#fff"/><circle cx="25" cy="2.2" r="1.9" fill="#fff"/></svg>
<svg width="27" height="25" viewBox="0 0 27 25" style="position:absolute;left:2488.3px;top:1412px">
<path d="M13 3.5 H7 Q2.5 3.5 2.5 8 V18 Q2.5 22.5 7 22.5 H17 Q21.5 22.5 21.5 18 V14" fill="none" stroke="#fff" stroke-width="3.6" stroke-linecap="round"/>
<path d="M9 17.5 L10 13 L20 3 L23.5 6.5 L13.5 16.5 Z" fill="#fff"/><circle cx="25" cy="2.2" r="1.9" fill="#fff"/></svg>
<svg width="22" height="21" viewBox="0 0 22 21" style="position:absolute;left:2619px;top:1413px;z-index:2"><path d="M2 1.5 L20 19.5 M20 1.5 L2 19.5" stroke="#fff" stroke-width="5.6" stroke-linecap="butt"/></svg>
<div class="t" style="left:2383.8px;top:1410.03px;font-size:25px;line-height:31px;color:#fff;font-weight:400;letter-spacing:0px;z-index:2;">View</div>
<div class="t" style="left:2521.8px;top:1410.03px;font-size:25px;line-height:31px;color:#fff;font-weight:400;letter-spacing:-0.4px;z-index:2;">Edit</div>
<div class="t" style="left:2649px;top:1410.03px;font-size:25px;line-height:31px;color:#fff;font-weight:400;letter-spacing:0px;z-index:2;">Delete</div>
<div class="r" style="left:480px;top:1486px;width:2280px;height:2px;background:#ddd;"></div>
<div class="t" style="left:497px;top:1506.24px;font-size:26px;line-height:32px;color:#474747;font-weight:400;letter-spacing:-0.277px;">Sekarang Ni Tgh Promo Percuma Satu Kurma Ajwa</div>
<div class="t" style="left:1729.75px;top:1506.24px;font-size:26px;line-height:32px;color:#474747;font-weight:400;letter-spacing:-0.2px;">Published</div>
<div class="t" style="left:1729.75px;top:1543.14px;font-size:26px;line-height:32px;color:#474747;font-weight:400;letter-spacing:-0.25px;">Apr 09, 2021</div>
<div class="r" style="left:2328px;top:1504px;width:133px;height:61px;background:#4e9b8f;border-radius:9px;"></div>
<div class="r" style="left:2467px;top:1504px;width:121px;height:61px;background:#4e9b8f;border-radius:9px;"></div>
<div class="r" style="left:2594px;top:1504px;width:150px;height:61px;background:#e8303e;border-radius:9px;"></div>
<svg width="27" height="25" viewBox="0 0 27 25" style="position:absolute;left:2349.5px;top:1521px">
<path d="M13 3.5 H7 Q2.5 3.5 2.5 8 V18 Q2.5 22.5 7 22.5 H17 Q21.5 22.5 21.5 18 V14" fill="none" stroke="#fff" stroke-width="3.6" stroke-linecap="round"/>
<path d="M9 17.5 L10 13 L20 3 L23.5 6.5 L13.5 16.5 Z" fill="#fff"/><circle cx="25" cy="2.2" r="1.9" fill="#fff"/></svg>
<svg width="27" height="25" viewBox="0 0 27 25" style="position:absolute;left:2488.3px;top:1521px">
<path d="M13 3.5 H7 Q2.5 3.5 2.5 8 V18 Q2.5 22.5 7 22.5 H17 Q21.5 22.5 21.5 18 V14" fill="none" stroke="#fff" stroke-width="3.6" stroke-linecap="round"/>
<path d="M9 17.5 L10 13 L20 3 L23.5 6.5 L13.5 16.5 Z" fill="#fff"/><circle cx="25" cy="2.2" r="1.9" fill="#fff"/></svg>
<svg width="22" height="21" viewBox="0 0 22 21" style="position:absolute;left:2619px;top:1522px;z-index:2"><path d="M2 1.5 L20 19.5 M20 1.5 L2 19.5" stroke="#fff" stroke-width="5.6" stroke-linecap="butt"/></svg>
<div class="t" style="left:2383.8px;top:1519.03px;font-size:25px;line-height:31px;color:#fff;font-weight:400;letter-spacing:0px;z-index:2;">View</div>
<div class="t" style="left:2521.8px;top:1519.03px;font-size:25px;line-height:31px;color:#fff;font-weight:400;letter-spacing:-0.4px;z-index:2;">Edit</div>
<div class="t" style="left:2649px;top:1519.03px;font-size:25px;line-height:31px;color:#fff;font-weight:400;letter-spacing:0px;z-index:2;">Delete</div>
<svg class="r" style="left:1023px;top:1185.5px" width="9" height="22" viewBox="0 0 9 22"><path d="M0.8 0.5 H8.2 L6 14.5 H3 Z" fill="#d80a0a"/><circle cx="4.5" cy="18.6" r="2.9" fill="#d80a0a"/></svg>
<div class="r" style="left:2212px;top:1560px;width:640px;height:80px;background:#2359c9;border-radius:11px;z-index:3;"></div>
<div class="t" style="left:2243.5px;top:1579.21px;font-size:34px;line-height:42px;color:#fff;font-weight:400;letter-spacing:0px;z-index:3;-webkit-text-stroke:1.3px #fff;transform:scaleX(0.92);transform-origin:0 0;">Online</div>
<div class="t" style="left:2557px;top:1522.59px;font-size:28px;line-height:35px;color:#55aa33;font-weight:700;letter-spacing:0px;z-index:1;transform:scaleX(0.87);transform-origin:0 0;">ON</div>
<div class="t" style="left:2602px;top:1522.59px;font-size:28px;line-height:35px;color:#3f55c0;font-weight:700;letter-spacing:0px;z-index:1;transform:scaleX(0.87);transform-origin:0 0;">|</div>
<div class="t" style="left:2619.5px;top:1522.59px;font-size:28px;line-height:35px;color:#3f55c0;font-weight:700;letter-spacing:0px;z-index:1;transform:scaleX(0.87);transform-origin:0 0;">LIVE</div>
<svg class="r" style="left:2700px;top:1495px;z-index:4" width="130" height="125" viewBox="0 0 130 125">
<ellipse cx="64" cy="61.6" rx="58" ry="53" fill="#fff"/>
<g fill="none" stroke-linecap="round" stroke-linejoin="round">
<ellipse cx="35.4" cy="35.8" rx="9.6" ry="6.6" stroke="#2358c8" stroke-width="6"/>
<g transform="translate(-81.46,-18.26) scale(1.04,1.15)">
<path d="M106 61 C105.5 78 107 86 112.5 86 C118 86 122.5 62 126.5 62 C130.5 62 132.5 86 137 86 C142 86 146.5 62 151 62 C155.5 62 158.5 86 163 86 C168 86 172 62 177 62 C182 62 184.5 66 181.5 68.5" stroke="#2358c8" stroke-width="16.5"/>
<path d="M106 61 C105.5 78 107 86 112.5 86 C118 86 122.5 62 126.5 62 C130.5 62 132.5 86 137 86 C142 86 146.5 62 151 62 C155.5 62 158.5 86 163 86 C168 86 172 62 177 62 C182 62 184.5 66 181.5 68.5" stroke="#fff" stroke-width="5"/>
</g></g></svg>
</body></html>
